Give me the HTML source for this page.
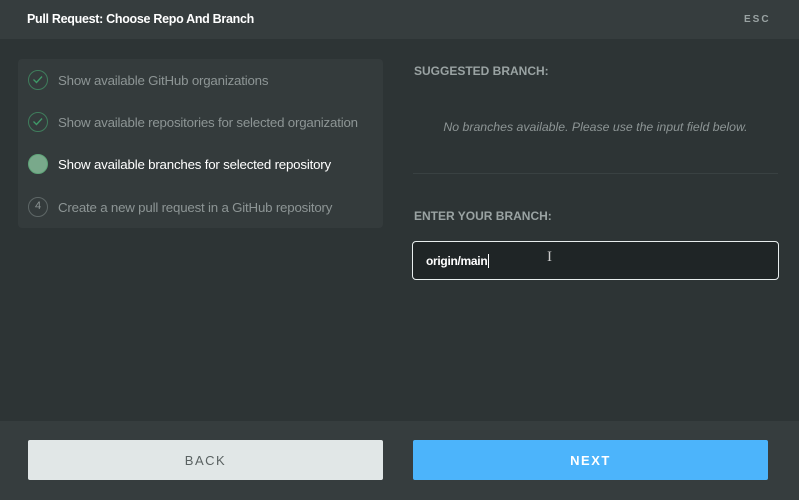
<!DOCTYPE html>
<html><head><style>
*{margin:0;padding:0;box-sizing:border-box}
body{width:799px;height:500px;background:#2d3435;font-family:"Liberation Sans",sans-serif;position:relative;overflow:hidden}
.hdr{position:absolute;left:0;top:0;width:799px;height:39px;background:#363d3e}
.title{position:absolute;left:27px;top:12px;color:#fff;font-size:12.5px;font-weight:bold;letter-spacing:-0.3px}
.esc{position:absolute;left:744px;top:14px;color:#9aa3a3;font-size:10px;font-weight:bold;letter-spacing:2px}
.panel{position:absolute;left:18px;top:59px;width:365px;height:169px;background:#343b3c;border-radius:4px}
.step{position:absolute;left:10px;height:20px;width:350px}
.ic{position:absolute;left:0;top:0;width:20px;height:20px;border:1.5px solid #3f7d5c;border-radius:50%}
.st{position:absolute;left:30px;top:3px;font-size:13.3px;color:#8d9595;white-space:nowrap;letter-spacing:-0.2px}
.lbl{position:absolute;left:414px;color:#9aa3a3;font-size:12px;font-weight:bold}
.none{position:absolute;left:413px;width:365px;top:120px;text-align:center;font-style:italic;color:#8d9595;font-size:12.3px}
.hr{position:absolute;left:413px;top:173px;width:365px;height:1px;background:#394142}
.inp{position:absolute;left:412px;top:241px;width:367px;height:39px;border:1.5px solid #e8eeee;border-radius:4px;background:#1f2526}
.inp span{position:absolute;left:13px;top:12px;color:#fff;font-size:12px;font-weight:bold;letter-spacing:-0.3px;border-right:1px solid #fff;padding-right:1px}
.ftr{position:absolute;left:0;top:421px;width:799px;height:79px;background:#363d3e}
.btn{position:absolute;top:440px;height:40px;width:355px;border-radius:2px;text-align:center;line-height:41px;font-size:13px;letter-spacing:1.5px}
</style></head><body>
<div class="hdr"><div class="title">Pull Request: Choose Repo And Branch</div><div class="esc">ESC</div></div>
<div class="panel">
<div class="step" style="top:11px"><div class="ic"><svg width="17" height="17" viewBox="0 0 17 17" style="position:absolute;left:0;top:0"><path d="M4.5 8.5l3 3 5.5-6" stroke="#3f9a68" stroke-width="1.3" fill="none"/></svg></div><div class="st">Show available GitHub organizations</div></div>
<div class="step" style="top:53px"><div class="ic"><svg width="17" height="17" viewBox="0 0 17 17" style="position:absolute;left:0;top:0"><path d="M4.5 8.5l3 3 5.5-6" stroke="#3f9a68" stroke-width="1.3" fill="none"/></svg></div><div class="st">Show available repositories for selected organization</div></div>
<div class="step" style="top:95px"><div class="ic" style="background:#79a98b;border-color:#5fa579"></div><div class="st" style="color:#fff">Show available branches for selected repository</div></div>
<div class="step" style="top:138px"><div class="ic" style="border-color:#5e6767;color:#8d9595;font-size:11px;text-align:center;line-height:17px">4</div><div class="st">Create a new pull request in a GitHub repository</div></div>
</div>
<div class="lbl" style="top:64px">SUGGESTED BRANCH:</div>
<div class="none">No branches available. Please use the input field below.</div>
<div class="hr"></div>
<div class="lbl" style="top:209px">ENTER YOUR BRANCH:</div>
<div class="inp"><span>origin/main</span></div>
<div style="position:absolute;left:547px;top:249px;color:#ccc;font-size:15px;font-family:'Liberation Serif',serif">I</div>
<div class="ftr"></div>
<div class="btn" style="left:28px;background:#e1e7e7;color:#5a6262">BACK</div>
<div class="btn" style="left:413px;background:#4cb4fb;color:#fff;font-weight:bold">NEXT</div>
</body></html>
